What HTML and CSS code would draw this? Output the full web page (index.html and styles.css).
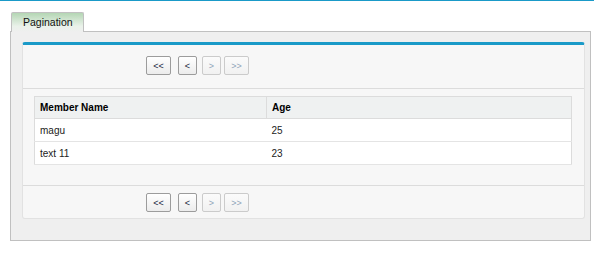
FILE: index.html
```html
<!DOCTYPE html>
<html lang="en">
<head>
  <meta charset="UTF-8" />
  <title>Pagination</title>
  <link rel="stylesheet" href="styles.css">
</head>
<body>

<div class="page">
  <div class="tabs">
    <div class="tab">Pagination</div>
  </div>

  <div class="panel">
    <div class="box">
      <!-- top pager -->
      <div class="pager pager-top">
        <button class="pg-btn first">&lt;&lt;</button>
        <button class="pg-btn">&lt;</button>
        <button class="pg-btn off">&gt;</button>
        <button class="pg-btn last off">&gt;&gt;</button>
      </div>

      <div class="list">
        <table class="grid">
          <thead>
            <tr>
              <th class="col-name">Member Name</th>
              <th>Age</th>
            </tr>
          </thead>
          <tbody>
            <tr><td>magu</td><td>25</td></tr>
            <tr><td>text 11</td><td>23</td></tr>
          </tbody>
        </table>
      </div>

      <!-- bottom pager -->
      <div class="pager pager-bottom">
        <button class="pg-btn first">&lt;&lt;</button>
        <button class="pg-btn">&lt;</button>
        <button class="pg-btn off">&gt;</button>
        <button class="pg-btn last off">&gt;&gt;</button>
      </div>
    </div>
  </div>
</div>

</body>
</html>
```

FILE: styles.css
```css
body {
  margin: 0;
  font-family: 'Liberation Sans', Arial, sans-serif;
  background: #fff;
  color: #222;
  border-top: 1px solid #1a9ac8;
}
.page {
  padding: 11px 3px 0 10px;
}
.tabs {
  display: flex;
  padding-left: 1px;
  position: relative;
  z-index: 1;
}
.tab {
  width: 60px;
  height: 19px;
  line-height: 19px;
  padding-left: 11px;
  font-size: 10.5px;
  color: #111;
  border: 1px solid #c0c0c0;
  border-bottom: none;
  border-radius: 2px 2px 0 0;
  background: linear-gradient(#b4d6b4, #eaf2ea 70%, #efefef);
}
.panel {
  margin-top: -1px;
  border: 1px solid #c0c0c0;
  background: #efefef;
  padding: 10px 5px 21px 11px;
}
.box {
  background: #f7f7f7;
  border: 1px solid #e2e2e2;
  border-top: 3px solid #1a9ac8;
  border-radius: 3px;
}
.pager {
  display: flex;
  gap: 5px;
  padding-left: 123px;
}
.pager-top {
  padding-top: 11px;
  padding-bottom: 13px;
  border-bottom: 1px solid #dcdcdc;
}
.pager-bottom {
  padding-top: 7px;
  padding-bottom: 6px;
  border-top: 1px solid #dcdcdc;
}
.pg-btn {
  width: 19px;
  height: 19px;
  padding: 0;
  font-family: 'Liberation Sans', Arial, sans-serif;
  font-size: 9px;
  color: #1b2740;
  border: 1px solid #9c9c9c;
  border-radius: 2px;
  background: linear-gradient(#ffffff, #ececec);
}
.pg-btn.first {
  width: 25px;
  margin-right: 2px;
}
.pg-btn.last {
  width: 25px;
  margin-left: -2px;
}
.pg-btn.off {
  color: #8fa4b8;
  border-color: #cbcbcb;
  background: linear-gradient(#fbfbfb, #f1f1f1);
}
.list {
  padding: 7px 12px 20px 11px;
}
.grid {
  width: 100%;
  border-collapse: collapse;
  border: 1px solid #dcdcdc;
  font-size: 10px;
}
.grid th {
  text-align: left;
  font-weight: bold;
  color: #000;
  background: #eff1f1;
  height: 21px;
  padding: 0 5px;
  border-bottom: 1px solid #dcdcdc;
}
.grid th.col-name {
  width: 221px;
  border-right: 1px solid #dcdcdc;
}
.grid td {
  background: #fff;
  height: 22px;
  padding: 0 5px;
  border-bottom: 1px solid #e4e4e4;
}
```
